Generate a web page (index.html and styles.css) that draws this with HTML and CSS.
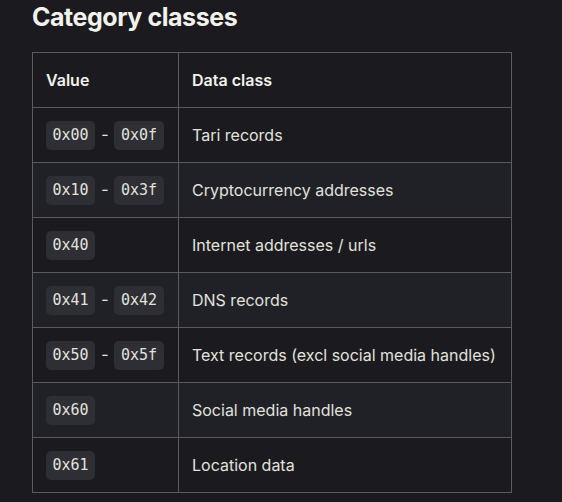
FILE: index.html
```html
<!DOCTYPE html>
<html>
<head>
<meta charset="utf-8">
<link rel="stylesheet" href="styles.css">
</head>
<body>
<main class="doc">
  <h2 class="title">Category classes</h2>
  <table class="classes">
    <thead>
      <tr><th class="col-value">Value</th><th>Data class</th></tr>
    </thead>
    <tbody>
      <tr><td class="value"><code>0x00</code> - <code>0x0f</code></td><td>Tari records</td></tr>
      <tr><td class="value"><code>0x10</code> - <code>0x3f</code></td><td>Cryptocurrency addresses</td></tr>
      <tr><td class="value"><code>0x40</code></td><td>Internet addresses / urls</td></tr>
      <tr><td class="value"><code>0x41</code> - <code>0x42</code></td><td>DNS records</td></tr>
      <tr><td class="value"><code>0x50</code> - <code>0x5f</code></td><td>Text records (excl social media handles)</td></tr>
      <tr><td class="value"><code>0x60</code></td><td>Social media handles</td></tr>
      <tr><td class="value"><code>0x61</code></td><td>Location data</td></tr>
    </tbody>
  </table>
</main>
</body>
</html>
```

FILE: styles.css
```css
html, body {
  margin: 0;
  padding: 0;
  background: #1b1b1f;
}
body {
  font-family: Inter, "Noto Sans", sans-serif;
  color: #e2e2dc;
}
.doc {
  padding: 0 32px;
}
.title {
  margin: 0;
  padding-top: 1px;
  font-size: 25px;
  line-height: 32px;
  font-weight: 700;
  letter-spacing: -0.45px;
  color: #f2f2ec;
}
.classes {
  margin-top: 19px;
  border-collapse: collapse;
  width: 480px;
  font-size: 16px;
  white-space: nowrap;
}
.classes th,
.classes td {
  border: 1px solid #5a5b60;
  height: 54px;
  padding: 0 13px;
  text-align: left;
  vertical-align: middle;
}
.classes th {
  font-weight: 600;
  color: #f2f2ec;
}
.col-value {
  width: 119px;
}
.classes .value {
  word-spacing: 1.5px;
}
.classes tbody tr:nth-child(even) {
  background: #202127;
}
code {
  display: inline-block;
  font-family: "DejaVu Sans Mono", monospace;
  font-size: 15px;
  line-height: 29px;
  padding: 0 6.5px;
  border-radius: 5px;
  background: #2e2f35;
  color: #e2e2dc;
}
```
